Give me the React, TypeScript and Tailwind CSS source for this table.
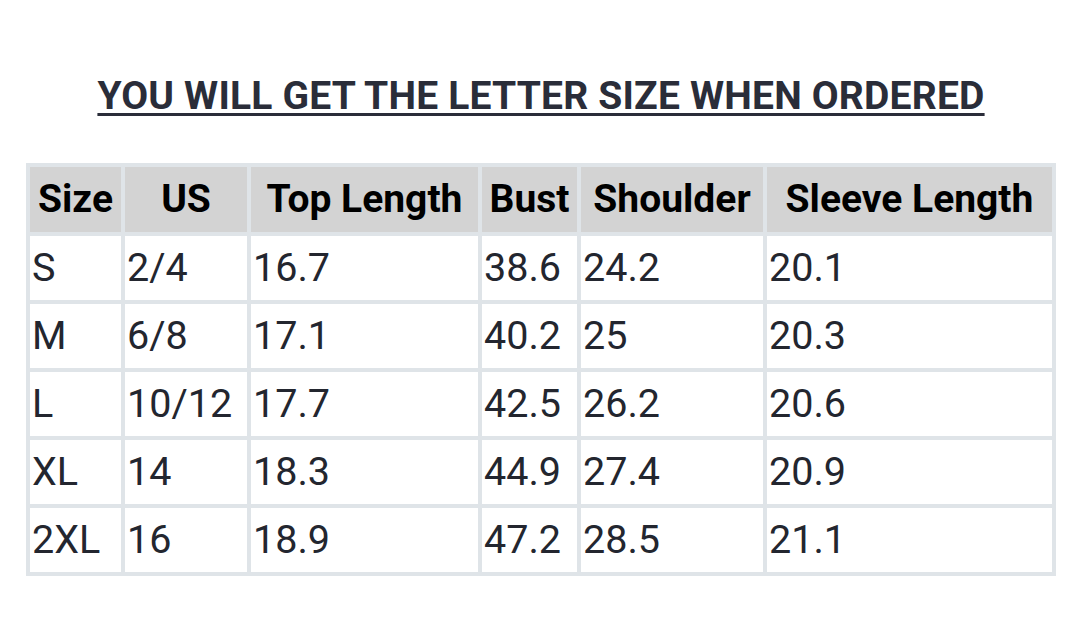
import React from "react";

const COLS = [
  { label: "Size", w: "w-[91px]" },
  { label: "US", w: "w-[122px]" },
  { label: "Top Length", w: "w-[227px]" },
  { label: "Bust", w: "w-[95px]" },
  { label: "Shoulder", w: "w-[182px]" },
  { label: "Sleeve Length", w: "w-[285px]" },
];

const ROWS = [
  ["S", "2/4", "16.7", "38.6", "24.2", "20.1"],
  ["M", "6/8", "17.1", "40.2", "25", "20.3"],
  ["L", "10/12", "17.7", "42.5", "26.2", "20.6"],
  ["XL", "14", "18.3", "44.9", "27.4", "20.9"],
  ["2XL", "16", "18.9", "47.2", "28.5", "21.1"],
];

export default function App() {
  return (
    <div className="w-[1080px] h-[639px] bg-white flex flex-col items-center font-['Roboto',sans-serif] pt-[77px]">
      {/* heading */}
      <h1 className="h-[39px] ml-[2px] text-[39px] leading-none font-bold tracking-[0.2px] text-[#2a2d39] underline decoration-[3px] underline-offset-[4px]">
        YOU WILL GET THE LETTER SIZE WHEN ORDERED
      </h1>

      {/* size chart */}
      <table className="mt-[47px] ml-[2px] w-[1030px] table-fixed border-separate border-spacing-[4px] bg-[#dfe4e8]">
        <thead>
          <tr>
            {COLS.map(c => (
              <th key={c.label} className={`${c.w} h-[65px] p-0 bg-[#d3d3d3] text-center text-[39px] leading-none font-bold text-black whitespace-nowrap`}>
                {c.label}
              </th>
            ))}
          </tr>
        </thead>
        <tbody>
          {ROWS.map((r, i) => (
            <tr key={i}>
              {r.map((v, j) => (
                <td key={j} className="h-[64px] p-0 pl-[2px] bg-white text-left text-[39.5px] leading-none font-normal text-[#23262f] whitespace-nowrap">
                  {v}
                </td>
              ))}
            </tr>
          ))}
        </tbody>
      </table>
    </div>
  );
}
